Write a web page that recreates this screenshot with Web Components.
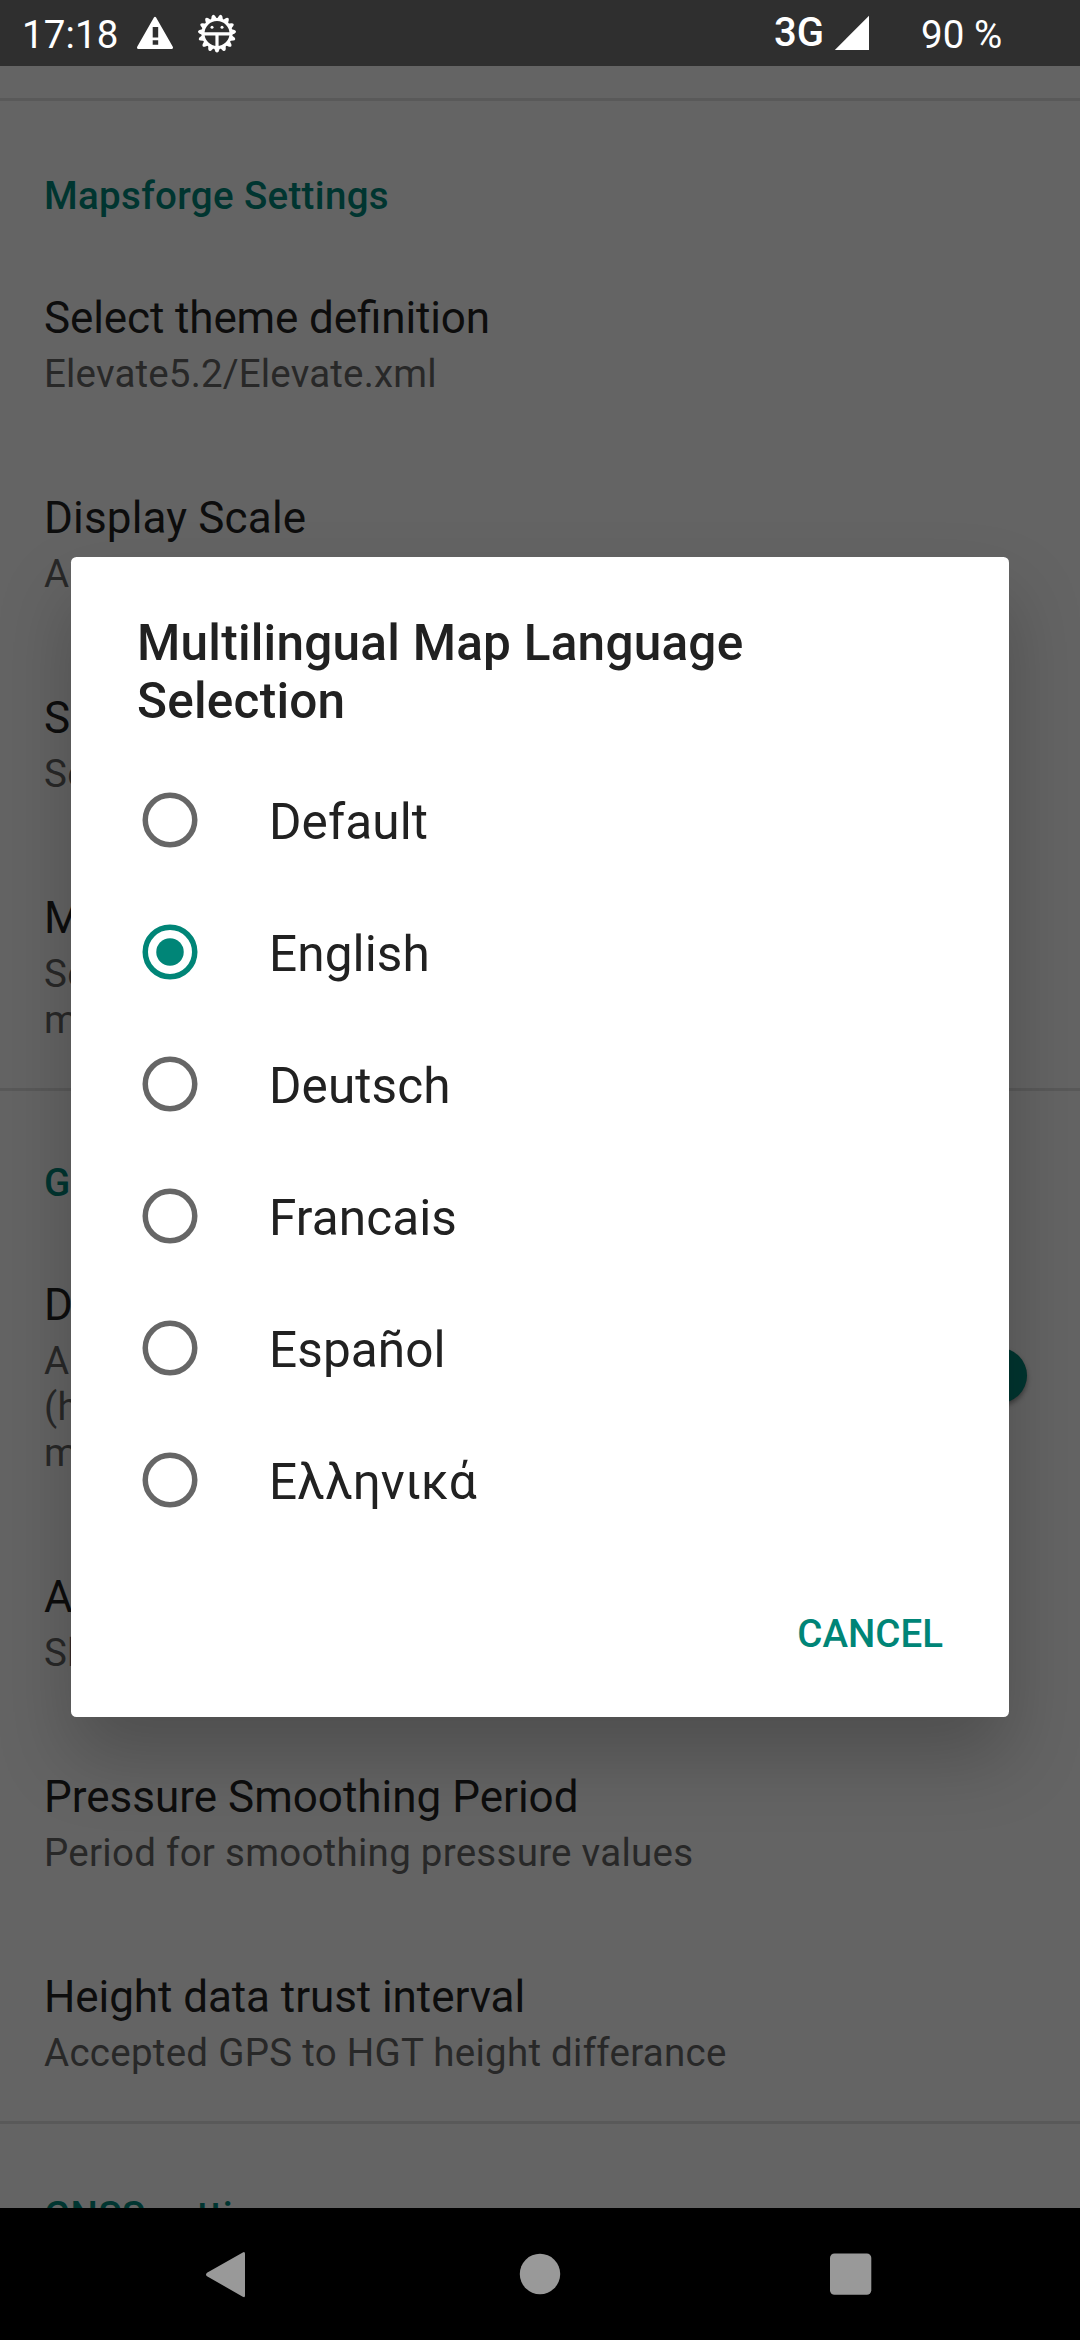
<!DOCTYPE html>
<html lang="en">
<head>
<meta charset="utf-8">
<title>Settings</title>
<style>
html,body{margin:0;padding:0}
body{width:1080px;height:2340px;overflow:hidden;background:#646464;font-family:Roboto,"Noto Sans",sans-serif;color:#0d0d0d}
</style>
</head>
<body>
<settings-screen></settings-screen>
<script>
const define = (name, html) => {
  const template = document.createElement('template');
  template.innerHTML = html;
  customElements.define(name, class extends HTMLElement {
    constructor() {
      super();
      this.attachShadow({ mode: 'open' }).append(template.content.cloneNode(true));
    }
  });
};

/* Cogwheel outline: fifteen teeth with one pointing straight down. */
const teeth = Array.from({ length: 15 }, (_, i) =>
  `<path d="M-3.4 13.5L-1.7 17.8Q0 20.4 1.7 17.8L3.4 13.5Z" transform="rotate(${i * 24})"/>`).join('');

define('status-bar', `
<style>
:host{display:flex;align-items:flex-start;height:66px;flex:none;background:#2f2f2f;color:#fff;font-size:38.5px;line-height:46px;white-space:pre}
svg{display:block;flex:none}
.time{width:114px;padding:12px 0 0 22px;letter-spacing:.15px}
.warn{margin-top:15px}
.gear{margin:13px 0 0 20px}
.net{margin:10px 0 0 536px;width:60px;font-size:40px;font-weight:460}
.sig{margin-top:15px}
.bat{margin:12px 0 0 51px;letter-spacing:.1px}
</style>
<span class="time">17:18</span>
<svg class="warn" width="40" height="36" viewBox="0 0 40 36"><path fill="#fff" fill-rule="evenodd" d="M17.9 2.6Q19 .9 20.100 2.600L36.800 31.800Q37.600 33.900 35.600 33.900H2.400Q.4 33.900 1.200 31.800ZM16.700 12V22.500H22.200V12ZM16.700 25.200V29.700H22.200V25.200Z"/></svg>
<svg class="gear" width="42" height="42" viewBox="-21 -20.500 42 42" fill="#fff"><g>${teeth}</g><circle r="14" fill="none" stroke="#fff" stroke-width="3"/><path d="M-14-1.200H14V1.900H1.600V14H-1.600V1.900H-14Z"/><circle cx="-5" cy="-6.200" r="1.500"/><circle cx="5" cy="-6.200" r="1.500"/></svg>
<span class="net">3G</span>
<svg class="sig" width="36" height="36"><path d="M35 .8V35H.8Z" fill="#fff"/></svg>
<span class="bat">90 %</span>`);

define('pref-category', `
<style>
:host{display:block;border-top:3px solid #595959;padding:69px 44px 23px;font-size:38.5px;line-height:46px;font-weight:500;letter-spacing:.33px;color:#003530}
:host([first]){padding-top:72px}
</style><slot></slot>`);

define('pref-item', `
<style>
:host{display:flex;align-items:center;padding:50px 44px 45px;white-space:pre-line;font-feature-settings:"liga" 1}
.text{flex:1}
.title{font-size:44px;line-height:52px;color:#0d0d0d;letter-spacing:var(--title-spacing,0)}
.sum{margin-top:7px;font-size:38.5px;line-height:46px;color:#282828;letter-spacing:var(--sum-spacing,.27px)}
</style>
<div class="text"><div class="title"><slot name="title"></slot></div><div class="sum"><slot></slot></div></div>
<slot name="widget"></slot>`);

define('pref-switch', `
<style>
:host{display:flex;align-items:center;justify-content:flex-end;width:93px;height:38px;border-radius:19px;background:#445552;margin:-5px 9px 0 0}
i{width:55px;height:55px;border-radius:50%;background:#003530;box-shadow:0 3px 5px rgba(0,0,0,.4)}
</style><i></i>`);

define('radio-option', `
<style>
:host{display:flex;align-items:center;height:132px;font-size:49.5px;letter-spacing:.1px;color:#212121}
svg{display:block;margin:0 71px 0 71px}
span{line-height:58px;padding-top:4px}
svg{color:#666}
:host([checked]) svg{color:#008577}
.dot{display:none}
:host([checked]) .dot{display:block}
</style>
<svg width="56" height="56" viewBox="-28 -28 56 56"><circle r="24.750" fill="none" stroke="currentColor" stroke-width="5.500"/><circle class="dot" r="13.750" fill="currentColor"/></svg>
<span><slot></slot></span>`);

define('choice-dialog', `
<style>
:host{position:absolute;left:71px;top:557px;width:938px;height:1160px;box-sizing:border-box;display:flex;flex-direction:column;background:#fff;border-radius:5.5px;box-shadow:0 40px 75px rgba(0,0,0,.22)}
.title{padding:57px 66px 24px;font-size:49.5px;line-height:58px;font-weight:500;letter-spacing:.24px;color:#212121}
.actions{display:flex;justify-content:flex-end;padding:65px 66px 0 0;font-size:38.5px;line-height:46px;font-weight:500;color:#008577}
</style>
<div class="title"><slot name="title"></slot></div>
<slot></slot>
<div class="actions"><slot name="action"></slot></div>`);

define('nav-bar', `
<style>
:host{display:flex;align-items:center;height:132px;flex:none;background:#000;padding-left:205px}
svg{display:block;flex:none;fill:#999}
.home{margin-left:272px}
.recent{margin-left:269px}
</style>
<svg width="42" height="48" viewBox="205 2250 42 48"><path d="M242.800 2252.400Q245 2251.200 245 2253.800V2295.600Q245 2298 242.800 2296.700L207 2276.300Q205 2274.500 207 2272.700Z"/></svg>
<svg class="home" width="42" height="42" viewBox="-21 -21 42 42"><circle r="20.200"/></svg>
<svg class="recent" width="42" height="42"><rect y=".500" width="41.300" height="41.300" rx="4.500"/></svg>`);

define('settings-screen', `
<style>
:host{display:flex;flex-direction:column;width:1080px;height:2340px;position:relative;overflow:hidden}
main{flex:1;min-height:0;overflow:hidden;padding-top:32px;background:#646464}
</style>
<status-bar></status-bar>
<main>
<pref-category first>Mapsforge Settings</pref-category>
<pref-item style="--title-spacing:-.12px;--sum-spacing:.16px"><span slot="title">Select theme definition</span>Elevate5.2/Elevate.xml</pref-item>
<pref-item style="--title-spacing:.16px"><span slot="title">Display Scale</span>A</pref-item>
<pref-item><span slot="title">S</span>Se</pref-item>
<pref-item><span slot="title">M</span>Se
m</pref-item>
<pref-category>G</pref-category>
<pref-item><span slot="title">D</span>A
(h
m<pref-switch slot="widget"></pref-switch></pref-item>
<pref-item><span slot="title">A</span>Sh</pref-item>
<pref-item><span slot="title">Pressure Smoothing Period</span>Period for smoothing pressure values</pref-item>
<pref-item style="--title-spacing:-.07px"><span slot="title">Height data trust interval</span>Accepted GPS to HGT height differance</pref-item>
<pref-category>GNSS settings</pref-category>
</main>
<nav-bar></nav-bar>
<choice-dialog>
<span slot="title">Multilingual Map Language Selection</span>
<radio-option>Default</radio-option>
<radio-option checked>English</radio-option>
<radio-option>Deutsch</radio-option>
<radio-option>Francais</radio-option>
<radio-option>Español</radio-option>
<radio-option>Ελληνικά</radio-option>
<span slot="action">CANCEL</span>
</choice-dialog>`);
</script>
</body>
</html>
